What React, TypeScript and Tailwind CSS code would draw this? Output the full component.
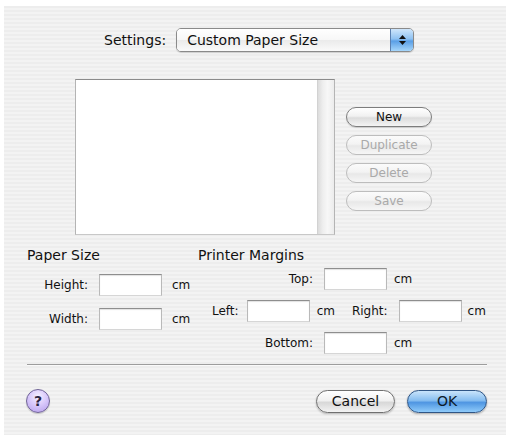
import React from 'react';

const font = { fontFamily: '"DejaVu Sans", "Liberation Sans", sans-serif' };

function PushButton({ label, disabled }: { label: string; disabled?: boolean }) {
  return (
    <div
      className={
        'flex h-[20px] w-[86px] items-center justify-center rounded-full border text-[12px] leading-none ' +
        (disabled
          ? 'border-[#bdbdbd] text-[#a9a9a9] bg-[linear-gradient(to_bottom,#fbfbfb_0%,#f3f3f3_45%,#e8e8e8_55%,#f6f6f6_100%)]'
          : 'border-[#7d7d7d] text-[#111] bg-[linear-gradient(to_bottom,#ffffff_0%,#f1f1f1_45%,#dcdcdc_55%,#f4f4f4_100%)] shadow-[0_1px_1px_rgba(0,0,0,0.15)]')
      }
    >
      {label}
    </div>
  );
}

function Field({ w = 'w-[63px]' }: { w?: string }) {
  return (
    <div
      className={
        w +
        ' h-[22px] bg-white border border-t-[#8e8e8e] border-x-[#b9b9b9] border-b-[#d6d6d6] shadow-[inset_0_1px_1px_rgba(0,0,0,0.12)]'
      }
    />
  );
}

export default function App() {
  return (
    <div className="w-[509px] h-[437px] bg-white pt-[6px] pl-[4px]" style={font}>
      <div className="w-[502px] h-[429px] bg-[repeating-linear-gradient(to_bottom,#ededed_0px,#ededed_2px,#f3f3f3_2px,#f3f3f3_4px)] text-[#111]">
        {/* settings popup */}
        <div className="flex items-center pl-[100px] pt-[22px]">
          <span className="text-[14px] leading-[24px]">Settings:</span>
          <div className="ml-[10px] flex h-[24px] w-[238px] overflow-hidden rounded-[5px] border border-[#8a8a8a] shadow-[0_1px_1px_rgba(0,0,0,0.15)]">
            <div className="flex flex-1 items-center pl-[10px] text-[14px] bg-[linear-gradient(to_bottom,#ffffff_0%,#f7f7f7_50%,#ebebeb_52%,#fafafa_100%)]">
              Custom Paper Size
            </div>
            <div className="flex w-[23px] flex-col items-center justify-center gap-[2px] border-l border-[#5a7fb0] bg-[linear-gradient(to_bottom,#cfe6fb_0%,#8fc2f2_45%,#5a9fe6_55%,#a6d6fb_100%)]">
              <svg width="7" height="4" viewBox="0 0 7 4">
                <path d="M3.5 0 L7 4 L0 4 Z" fill="#111" />
              </svg>
              <svg width="7" height="4" viewBox="0 0 7 4">
                <path d="M0 0 L7 0 L3.5 4 Z" fill="#111" />
              </svg>
            </div>
          </div>
        </div>

        {/* list + buttons */}
        <div className="mt-[27px] flex pl-[71px]">
          <div className="flex h-[156px] w-[260px] border border-t-[#8b8b8b] border-x-[#b4b4b4] border-b-[#c8c8c8] bg-white">
            <div className="flex-1" />
            <div className="w-[17px] border-l border-[#d2d2d2] bg-[linear-gradient(to_right,#dcdcdc_0%,#eeeeee_30%,#f7f7f7_60%,#ececec_100%)]" />
          </div>
          <div className="ml-[11px] mt-[28px] flex flex-col gap-[8px]">
            <PushButton label="New" />
            <PushButton label="Duplicate" disabled />
            <PushButton label="Delete" disabled />
            <PushButton label="Save" disabled />
          </div>
        </div>

        {/* paper size + margins */}
        <div className="mt-[12px] flex pl-[23px] text-[12px]">
          <div className="w-[171px]">
            <div className="text-[14px] leading-[17px]">Paper Size</div>
            <div className="mt-[10px] flex flex-col gap-[12px]">
              {['Height:', 'Width:'].map((l) => (
                <div key={l} className="flex items-center">
                  <span className="w-[61px] text-right">{l}</span>
                  <div className="ml-[11px]">
                    <Field />
                  </div>
                  <span className="ml-[10px]">cm</span>
                </div>
              ))}
            </div>
          </div>
          <div>
            <div className="text-[14px] leading-[17px]">Printer Margins</div>
            <div className="mt-[4px] flex flex-col gap-[10px]">
              <div className="flex items-center">
                <span className="w-[115px] text-right">Top:</span>
                <div className="ml-[11px]">
                  <Field />
                </div>
                <span className="ml-[7px]">cm</span>
              </div>
              <div className="flex items-center pl-[14px]">
                <span>Left:</span>
                <div className="ml-[8px]">
                  <Field />
                </div>
                <span className="ml-[7px]">cm</span>
                <span className="ml-[17px]">Right:</span>
                <div className="ml-[11px]">
                  <Field />
                </div>
                <span className="ml-[6px]">cm</span>
              </div>
              <div className="flex items-center">
                <span className="w-[115px] text-right">Bottom:</span>
                <div className="ml-[11px]">
                  <Field />
                </div>
                <span className="ml-[7px]">cm</span>
              </div>
            </div>
          </div>
        </div>

        {/* separator */}
        <div className="ml-[23px] mt-[10px] w-[460px]">
          <div className="h-px bg-[#9d9d9d]" />
          <div className="h-px bg-[#fafafa]" />
        </div>

        {/* bottom buttons */}
        <div className="mt-[23px] flex items-center pl-[22px] pr-[19px]">
          <div className="flex h-[24px] w-[24px] items-center justify-center rounded-full border border-[#6f6396] bg-[radial-gradient(circle_at_50%_30%,#f6f0ff_0%,#d9c9fb_45%,#b49ceb_100%)] text-[14px] font-bold leading-none text-[#2a2340] shadow-[0_1px_1px_rgba(0,0,0,0.2)]">
            ?
          </div>
          <div className="ml-auto flex h-[23px] w-[79px] items-center justify-center rounded-full border border-[#6f6f6f] bg-[linear-gradient(to_bottom,#ffffff_0%,#f1f1f1_45%,#d8d8d8_55%,#f3f3f3_100%)] text-[14px] leading-none shadow-[0_1px_2px_rgba(0,0,0,0.25)]">
            Cancel
          </div>
          <div className="ml-[12px] flex h-[23px] w-[80px] items-center justify-center rounded-full border border-[#2f5585] bg-[linear-gradient(to_bottom,#c9e4fb_0%,#86bdf0_45%,#4f96e2_55%,#8fcbfa_100%)] text-[14px] leading-none text-[#0d1a2a] shadow-[0_1px_2px_rgba(0,0,0,0.3)]">
            OK
          </div>
        </div>
      </div>
    </div>
  );
}
